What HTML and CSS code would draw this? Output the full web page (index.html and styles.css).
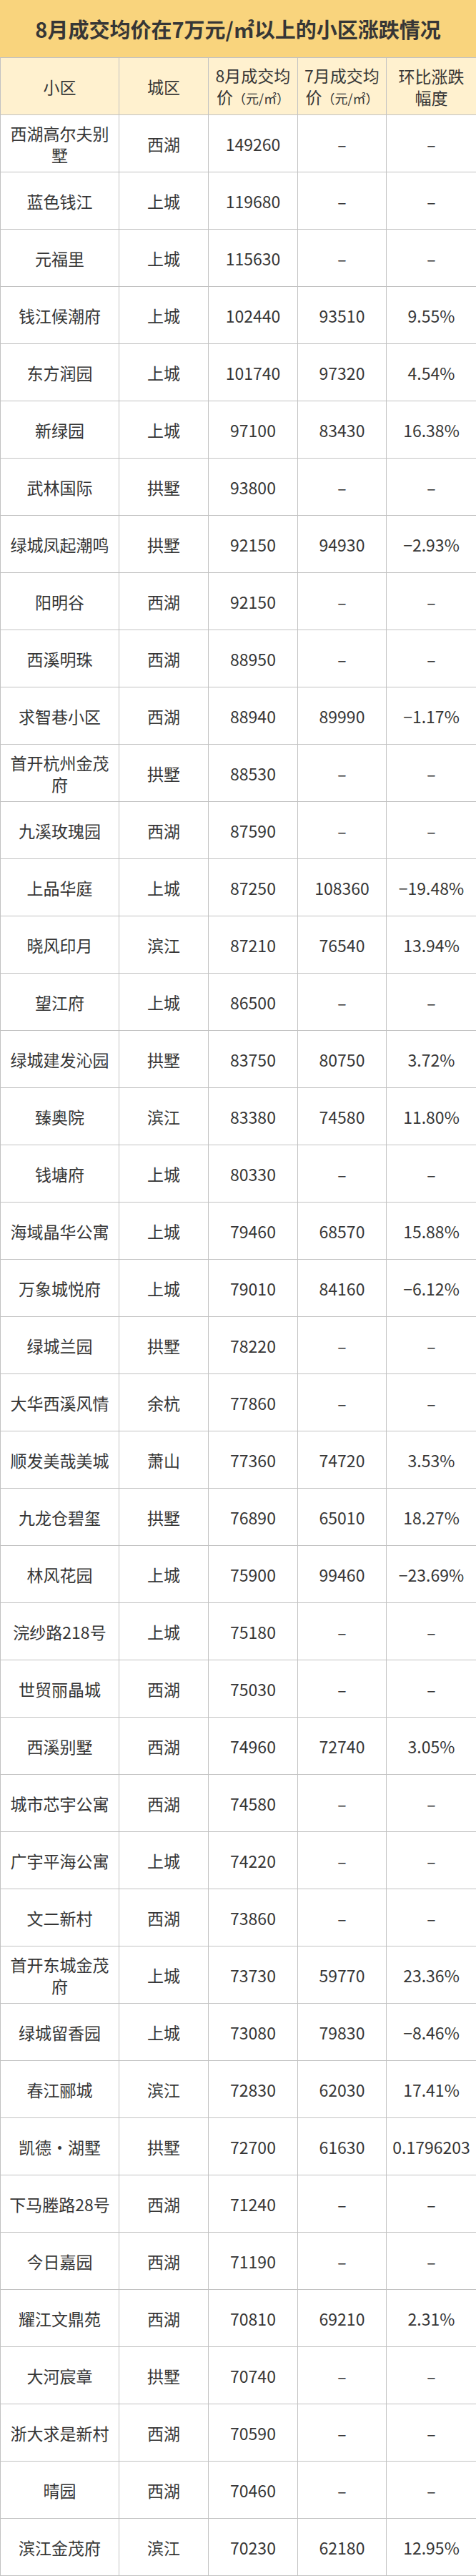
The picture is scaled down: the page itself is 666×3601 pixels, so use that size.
FILE: index.html
```html
<!DOCTYPE html>
<html lang="zh-CN">
<head>
<meta charset="utf-8">
<title>8月成交均价在7万元/㎡以上的小区涨跌情况</title>
<link rel="stylesheet" href="styles.css">
</head>
<body>
<div class="sheet">
  <div class="title">8月成交均价在7万元/㎡以上的小区涨跌情况</div>
  <table class="grid">
    <colgroup>
      <col class="c1"><col class="c2"><col class="c3"><col class="c4"><col class="c5">
    </colgroup>
    <thead>
      <tr>
        <th>小区</th>
        <th>城区</th>
        <th><span class="ln">8月成交均</span><span class="ln">价<span class="unit">（元/㎡）</span></span></th>
        <th><span class="ln">7月成交均</span><span class="ln">价<span class="unit">（元/㎡）</span></span></th>
        <th><span class="ln">环比涨跌</span><span class="ln">幅度</span></th>
      </tr>
    </thead>
    <tbody>
      <tr><td>西湖高尔夫别墅</td><td>西湖</td><td>149260</td><td>–</td><td>–</td></tr>
      <tr><td>蓝色钱江</td><td>上城</td><td>119680</td><td>–</td><td>–</td></tr>
      <tr><td>元福里</td><td>上城</td><td>115630</td><td>–</td><td>–</td></tr>
      <tr><td>钱江候潮府</td><td>上城</td><td>102440</td><td>93510</td><td>9.55%</td></tr>
      <tr><td>东方润园</td><td>上城</td><td>101740</td><td>97320</td><td>4.54%</td></tr>
      <tr><td>新绿园</td><td>上城</td><td>97100</td><td>83430</td><td>16.38%</td></tr>
      <tr><td>武林国际</td><td>拱墅</td><td>93800</td><td>–</td><td>–</td></tr>
      <tr><td>绿城凤起潮鸣</td><td>拱墅</td><td>92150</td><td>94930</td><td>−2.93%</td></tr>
      <tr><td>阳明谷</td><td>西湖</td><td>92150</td><td>–</td><td>–</td></tr>
      <tr><td>西溪明珠</td><td>西湖</td><td>88950</td><td>–</td><td>–</td></tr>
      <tr><td>求智巷小区</td><td>西湖</td><td>88940</td><td>89990</td><td>−1.17%</td></tr>
      <tr><td>首开杭州金茂府</td><td>拱墅</td><td>88530</td><td>–</td><td>–</td></tr>
      <tr><td>九溪玫瑰园</td><td>西湖</td><td>87590</td><td>–</td><td>–</td></tr>
      <tr><td>上品华庭</td><td>上城</td><td>87250</td><td>108360</td><td>−19.48%</td></tr>
      <tr><td>晓风印月</td><td>滨江</td><td>87210</td><td>76540</td><td>13.94%</td></tr>
      <tr><td>望江府</td><td>上城</td><td>86500</td><td>–</td><td>–</td></tr>
      <tr><td>绿城建发沁园</td><td>拱墅</td><td>83750</td><td>80750</td><td>3.72%</td></tr>
      <tr><td>臻奥院</td><td>滨江</td><td>83380</td><td>74580</td><td>11.80%</td></tr>
      <tr><td>钱塘府</td><td>上城</td><td>80330</td><td>–</td><td>–</td></tr>
      <tr><td>海域晶华公寓</td><td>上城</td><td>79460</td><td>68570</td><td>15.88%</td></tr>
      <tr><td>万象城悦府</td><td>上城</td><td>79010</td><td>84160</td><td>−6.12%</td></tr>
      <tr><td>绿城兰园</td><td>拱墅</td><td>78220</td><td>–</td><td>–</td></tr>
      <tr><td>大华西溪风情</td><td>余杭</td><td>77860</td><td>–</td><td>–</td></tr>
      <tr><td>顺发美哉美城</td><td>萧山</td><td>77360</td><td>74720</td><td>3.53%</td></tr>
      <tr><td>九龙仓碧玺</td><td>拱墅</td><td>76890</td><td>65010</td><td>18.27%</td></tr>
      <tr><td>林风花园</td><td>上城</td><td>75900</td><td>99460</td><td>−23.69%</td></tr>
      <tr><td>浣纱路218号</td><td>上城</td><td>75180</td><td>–</td><td>–</td></tr>
      <tr><td>世贸丽晶城</td><td>西湖</td><td>75030</td><td>–</td><td>–</td></tr>
      <tr><td>西溪别墅</td><td>西湖</td><td>74960</td><td>72740</td><td>3.05%</td></tr>
      <tr><td>城市芯宇公寓</td><td>西湖</td><td>74580</td><td>–</td><td>–</td></tr>
      <tr><td>广宇平海公寓</td><td>上城</td><td>74220</td><td>–</td><td>–</td></tr>
      <tr><td>文二新村</td><td>西湖</td><td>73860</td><td>–</td><td>–</td></tr>
      <tr><td>首开东城金茂府</td><td>上城</td><td>73730</td><td>59770</td><td>23.36%</td></tr>
      <tr><td>绿城留香园</td><td>上城</td><td>73080</td><td>79830</td><td>−8.46%</td></tr>
      <tr><td>春江郦城</td><td>滨江</td><td>72830</td><td>62030</td><td>17.41%</td></tr>
      <tr><td>凯德·湖墅</td><td>拱墅</td><td>72700</td><td>61630</td><td>0.1796203</td></tr>
      <tr><td>下马塍路28号</td><td>西湖</td><td>71240</td><td>–</td><td>–</td></tr>
      <tr><td>今日嘉园</td><td>西湖</td><td>71190</td><td>–</td><td>–</td></tr>
      <tr><td>耀江文鼎苑</td><td>西湖</td><td>70810</td><td>69210</td><td>2.31%</td></tr>
      <tr><td>大河宸章</td><td>拱墅</td><td>70740</td><td>–</td><td>–</td></tr>
      <tr><td>浙大求是新村</td><td>西湖</td><td>70590</td><td>–</td><td>–</td></tr>
      <tr><td>晴园</td><td>西湖</td><td>70460</td><td>–</td><td>–</td></tr>
      <tr><td>滨江金茂府</td><td>滨江</td><td>70230</td><td>62180</td><td>12.95%</td></tr>
    </tbody>
  </table>
</div>
</body>
</html>
```

FILE: styles.css
```css
html, body {
  margin: 0;
  padding: 0;
  background: #ffffff;
}

.sheet {
  width: 666px;
  font-family: "Noto Sans CJK SC", "Noto Sans", sans-serif;
  color: #363636;
}

.title {
  height: 80px;
  display: flex;
  align-items: center;
  justify-content: center;
  background: #f9d47d;
  font-size: 29px;
  font-weight: 700;
  color: #363636;
  line-height: 36px;
}

.grid {
  width: 666px;
  border-collapse: collapse;
  table-layout: fixed;
}

.c1 { width: 166px; }
.c2 { width: 125px; }
.c3 { width: 125px; }
.c4 { width: 124px; }
.c5 { width: 126px; }

.grid th,
.grid td {
  height: 80px;
  padding: 0 8px;
  border: 1px solid #c2c2c2;
  text-align: center;
  vertical-align: middle;
  font-size: 23px;
  line-height: 30px;
  font-weight: 400;
  box-sizing: border-box;
}

.grid th {
  background: #fff1cf;
  color: #363636;
}

.grid th .ln {
  display: block;
  white-space: nowrap;
}

.grid th .unit {
  font-size: 18px;
  line-height: 30px;
}
```
